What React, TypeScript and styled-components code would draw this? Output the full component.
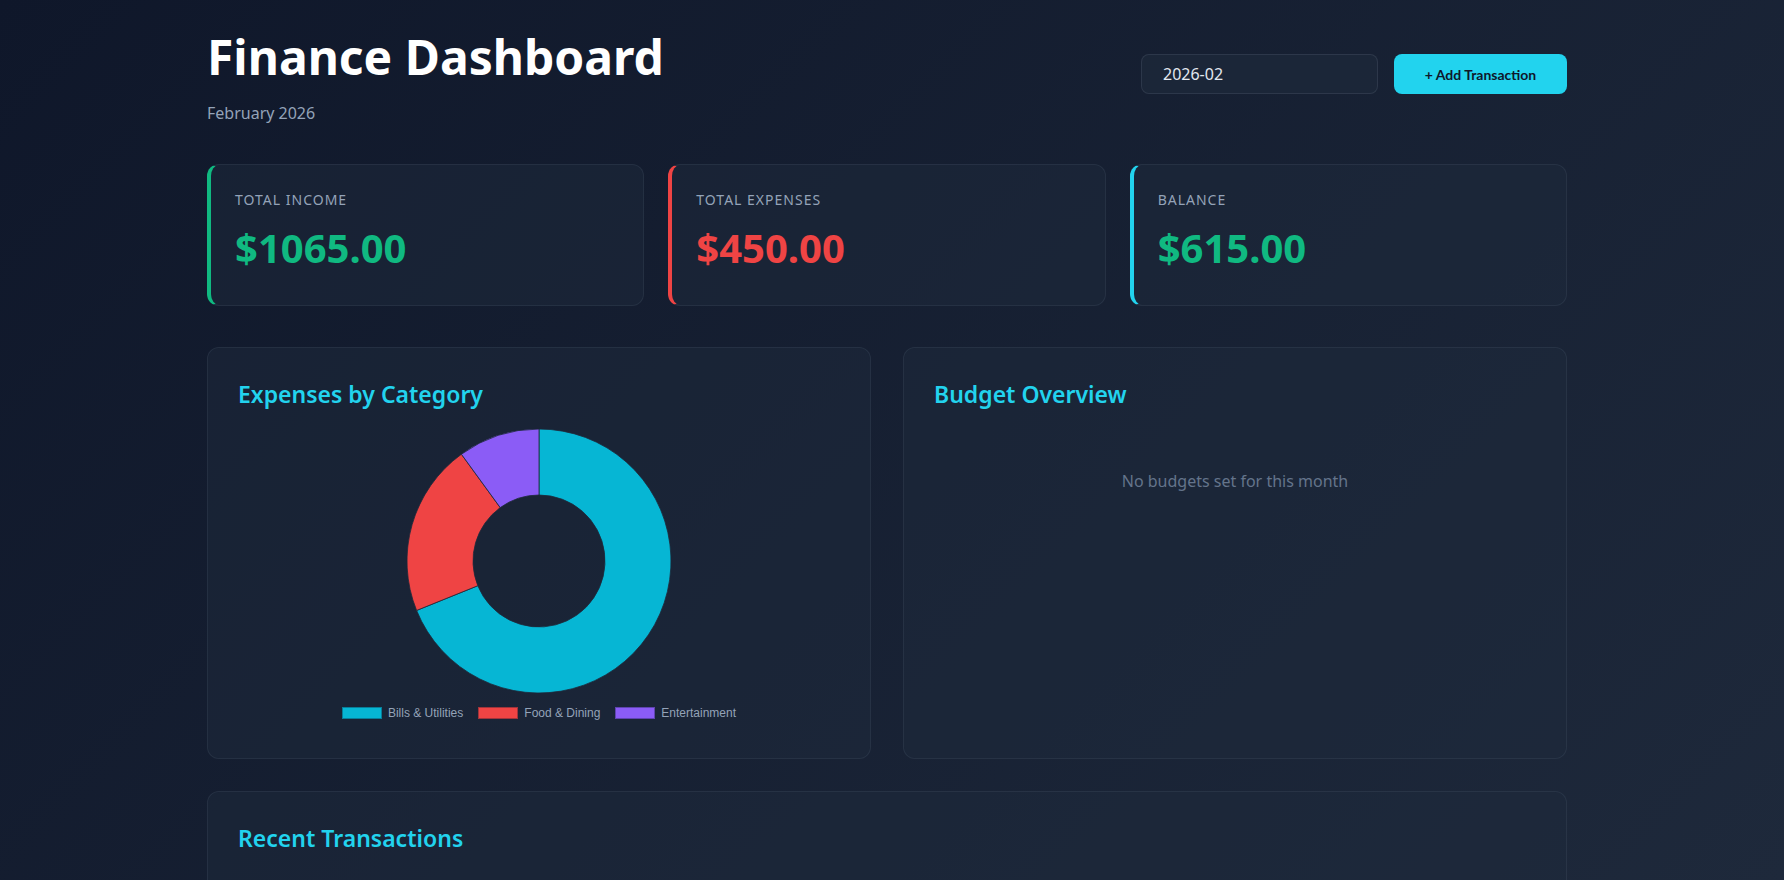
import React from "react";
import styled, { createGlobalStyle } from "styled-components";

const GlobalStyle = createGlobalStyle`
  * { box-sizing: border-box; }
  html, body { margin: 0; padding: 0; }
  body {
    min-height: 100vh;
    font-family: "Noto Sans", "Open Sans", sans-serif;
    color: #f1f5f9;
    background: linear-gradient(135deg, #0f172a 0%, #1e293b 100%);
    background-attachment: fixed;
  }
`;

const Outer = styled.div`
  padding-right: 10px;
`;

const Container = styled.main`
  max-width: 1360px;
  margin: 0 auto;
  padding: 28px 0 40px;
`;

const Header = styled.header`
  display: flex;
  justify-content: space-between;
  align-items: flex-start;
  margin-bottom: 39px;
`;

const TitleBlock = styled.div`
  display: flex;
  flex-direction: column;
`;

const Title = styled.h1`
  margin: 0 0 15px;
  font-size: 48px;
  line-height: 1.2;
  font-weight: 700;
  color: #ffffff;
`;

const Subtitle = styled.p`
  margin: 0;
  font-size: 16px;
  line-height: 1.5;
  color: #94a3b8;
`;

const Controls = styled.div`
  display: flex;
  gap: 16px;
  margin-top: 26px;
`;

const MonthInput = styled.input`
  width: 237px;
  height: 40px;
  padding: 0 21px;
  border-radius: 8px;
  border: 1px solid rgba(148, 163, 184, 0.14);
  background: rgba(30, 41, 59, 0.7);
  color: #e2e8f0;
  font-family: "Noto Sans", sans-serif;
  font-size: 16px;
  outline: none;
`;

const AddButton = styled.button`
  width: 173px;
  height: 40px;
  border: none;
  border-radius: 8px;
  background: #22d3ee;
  color: #0f172a;
  font-family: "Lato", "Liberation Sans", sans-serif;
  font-weight: 700;
  font-size: 14px;
  cursor: pointer;
`;

const StatGrid = styled.section`
  display: grid;
  grid-template-columns: repeat(3, 1fr);
  gap: 24px;
  margin-bottom: 41px;
`;

const StatCard = styled.div<{ $accent: string }>`
  background: rgba(30, 41, 59, 0.5);
  border: 1px solid rgba(148, 163, 184, 0.1);
  border-left: 4px solid ${(p) => p.$accent};
  border-radius: 12px;
  padding: 24px 24px 27px;
`;

const StatLabel = styled.div`
  font-size: 14px;
  line-height: 1.5;
  letter-spacing: 1px;
  text-transform: uppercase;
  color: #94a3b8;
  margin-bottom: 8px;
`;

const StatValue = styled.div<{ $color: string }>`
  font-size: 40px;
  line-height: 1.5;
  font-weight: 700;
  color: ${(p) => p.$color};
`;

const ChartGrid = styled.section`
  display: grid;
  grid-template-columns: 1fr 1fr;
  gap: 32px;
  margin-bottom: 32px;
`;

const Panel = styled.div<{ $minHeight?: number }>`
  background: rgba(30, 41, 59, 0.5);
  border: 1px solid rgba(148, 163, 184, 0.1);
  border-radius: 12px;
  padding: 30px;
  min-height: ${(p) => (p.$minHeight ? `${p.$minHeight}px` : "auto")};
`;

const PanelTitle = styled.h2`
  margin: 0 0 18px;
  font-size: 23px;
  line-height: 32.7px;
  font-weight: 600;
  color: #22d3ee;
`;

const ChartArea = styled.div`
  height: 300px;
  display: flex;
  flex-direction: column;
  align-items: center;
  padding-top: 1px;
`;

const Legend = styled.div`
  display: flex;
  gap: 15px;
  margin-top: 14px;
`;

const LegendItem = styled.div`
  display: flex;
  align-items: center;
  gap: 6px;
  font-family: "Liberation Sans", Arial, sans-serif;
  font-size: 12px;
  line-height: 12px;
  color: #94a3b8;
`;

const LegendSwatch = styled.span<{ $color: string }>`
  width: 40px;
  height: 12px;
  background: ${(p) => p.$color};
  border: 1px solid rgba(15, 23, 42, 0.35);
`;

const EmptyState = styled.p`
  margin: 0;
  padding-top: 41px;
  text-align: center;
  font-size: 16px;
  line-height: 1.5;
  color: #64748b;
`;

const stats = [
  { label: "Total Income", value: "$1065.00", accent: "#10b981", color: "#10b981" },
  { label: "Total Expenses", value: "$450.00", accent: "#ef4444", color: "#ef4444" },
  { label: "Balance", value: "$615.00", accent: "#22d3ee", color: "#10b981" },
];

const expenses = [
  { name: "Bills & Utilities", amount: 310, color: "#06b6d4" },
  { name: "Food & Dining", amount: 95, color: "#ef4444" },
  { name: "Entertainment", amount: 45, color: "#8b5cf6" },
];

function Donut({ size }: { size: number }) {
  const total = expenses.reduce((s, e) => s + e.amount, 0);
  const c = size / 2;
  const R = size / 2;
  const r = size / 4;
  const pt = (rad: number, deg: number) => {
    const a = (deg * Math.PI) / 180;
    return [c + rad * Math.sin(a), c - rad * Math.cos(a)];
  };
  let start = 0;
  return (
    <svg width={size} height={size} viewBox={`0 0 ${size} ${size}`}>
      {expenses.map((e) => {
        const sweep = (e.amount / total) * 360;
        const end = start + sweep;
        const large = sweep > 180 ? 1 : 0;
        const [x0, y0] = pt(R, start);
        const [x1, y1] = pt(R, end);
        const [x2, y2] = pt(r, end);
        const [x3, y3] = pt(r, start);
        const d = `M${x0} ${y0} A${R} ${R} 0 ${large} 1 ${x1} ${y1} L${x2} ${y2} A${r} ${r} 0 ${large} 0 ${x3} ${y3} Z`;
        start = end;
        return <path key={e.name} d={d} fill={e.color} stroke="#1e293b" strokeWidth={0.8} />;
      })}
    </svg>
  );
}

export default function App() {
  return (
    <>
      <GlobalStyle />
      <Outer>
        <Container>
          <Header>
            <TitleBlock>
              <Title>Finance Dashboard</Title>
              <Subtitle>February 2026</Subtitle>
            </TitleBlock>
            <Controls>
              <MonthInput type="text" value="2026-02" readOnly />
              <AddButton>+ Add Transaction</AddButton>
            </Controls>
          </Header>

          <StatGrid>
            {stats.map((s) => (
              <StatCard key={s.label} $accent={s.accent}>
                <StatLabel>{s.label}</StatLabel>
                <StatValue $color={s.color}>{s.value}</StatValue>
              </StatCard>
            ))}
          </StatGrid>

          <ChartGrid>
            <Panel>
              <PanelTitle>Expenses by Category</PanelTitle>
              <ChartArea>
                <Donut size={264} />
                <Legend>
                  {expenses.map((e) => (
                    <LegendItem key={e.name}>
                      <LegendSwatch $color={e.color} />
                      {e.name}
                    </LegendItem>
                  ))}
                </Legend>
              </ChartArea>
            </Panel>
            <Panel>
              <PanelTitle>Budget Overview</PanelTitle>
              <EmptyState>No budgets set for this month</EmptyState>
            </Panel>
          </ChartGrid>

          <Panel $minHeight={320}>
            <PanelTitle>Recent Transactions</PanelTitle>
          </Panel>
        </Container>
      </Outer>
    </>
  );
}
